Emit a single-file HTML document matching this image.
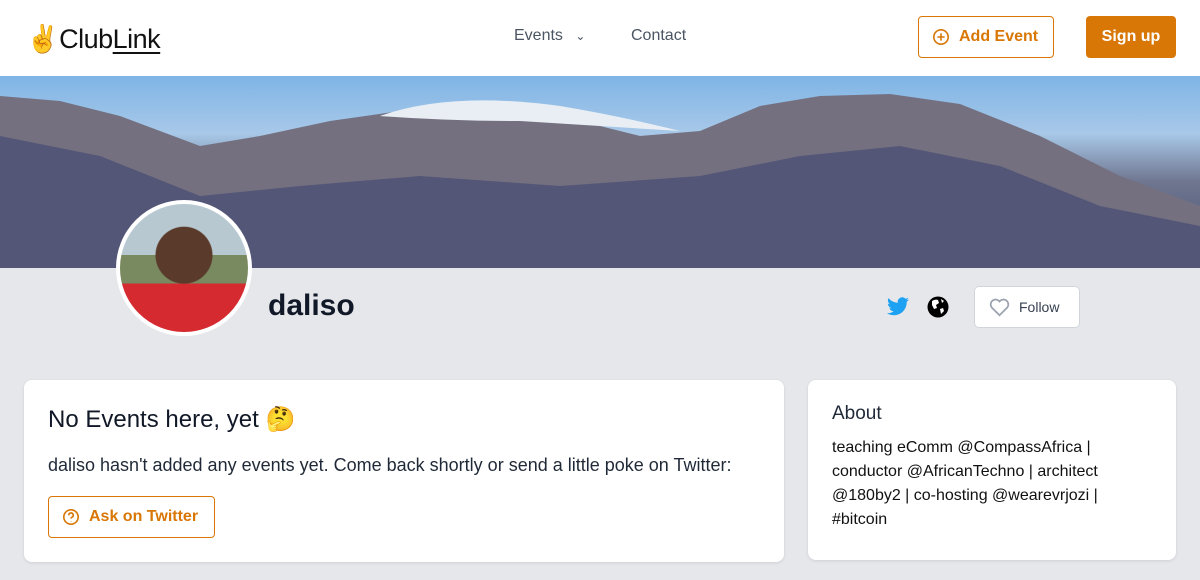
<!DOCTYPE html>
<html><head><meta charset="utf-8"><style>
*{box-sizing:border-box;margin:0;padding:0}
body{width:1200px;height:580px;overflow:hidden;background:#e5e7eb;font-family:"Liberation Sans","Noto Sans CJK JP",sans-serif;color:#111827}
.nav{height:76px;background:#fff;position:relative}
.logo{position:absolute;left:26px;top:23px;font-size:27px;color:#111;letter-spacing:-0.5px}
.logo u{text-decoration-thickness:2px;text-underline-offset:4px}
.nl{position:absolute;top:27px;font-size:16px;color:#4b5563}
.btn1{position:absolute;left:918px;top:16px;width:136px;height:42px;border:1px solid #d97706;border-radius:4px;color:#d97706;font-weight:bold;font-size:16px;padding:11px 0 0 40px}
.btn2{position:absolute;left:1086px;top:16px;width:90px;height:42px;background:#d97706;border-radius:4px;color:#fff;font-weight:bold;font-size:16px;text-align:center;padding-top:12px}
.banner{height:192px;position:relative;overflow:hidden;background:linear-gradient(#7fb5e6,#a8c8e8 30%,#6f7690 55%,#55607e 80%,#4a5478)}
.av{position:absolute;left:116px;top:200px;width:136px;height:136px;border-radius:50%;border:4px solid #fff;background:radial-gradient(circle at 50% 40%,#5a3a2a 0 28%,transparent 29%),linear-gradient(#b8c8d0 0 40%,#7a8a60 40% 62%,#d42a30 62%);}
.name{position:absolute;left:268px;top:289px;font-size:30px;font-weight:bold}
.follow{position:absolute;left:974px;top:286px;width:106px;height:42px;background:#fff;border:1px solid #d1d5db;border-radius:5px;font-size:14px;color:#374151;padding:12px 0 0 44px}
.card{position:absolute;background:#fff;border-radius:8px;box-shadow:0 1px 3px rgba(0,0,0,.1)}
</style></head><body>
<div class="nav">
<div class="logo">✌️Club<u>Link</u></div>
<div class="nl" style="left:514px">Events <span style="margin-left:8px;font-size:12px">&#8964;</span></div>
<div class="nl" style="left:631px">Contact</div>
<div class="btn1"><svg style="position:absolute;left:13px;top:11px" width="18" height="18" viewBox="0 0 20 20" fill="none" stroke="#d97706" stroke-width="1.8"><circle cx="10" cy="10" r="8"/><path d="M10 6v8M6 10h8"/></svg>Add Event</div>
<div class="btn2">Sign up</div>
</div>
<div class="banner">
<svg width="1200" height="192" style="position:absolute;left:0;top:0">
<path d="M0 20 L60 25 L120 40 L200 70 L260 60 L330 45 L400 35 L460 30 L560 40 L640 60 L700 55 L760 30 L820 20 L890 18 L960 28 L1040 60 L1120 100 L1200 130 L1200 192 L0 192Z" fill="#747080"/>
<path d="M0 60 L100 80 L200 120 L300 110 L420 100 L560 110 L700 100 L800 80 L900 70 L1000 90 L1100 130 L1200 150 L1200 192 L0 192Z" fill="#535676"/>
<path d="M380 40 Q450 15 560 30 Q620 40 680 55 Q600 50 520 45 Q450 45 380 40Z" fill="#e8eef4"/>
</svg>
</div>
<div class="av"></div>
<div class="name">daliso</div>
<svg style="position:absolute;left:887px;top:297px" width="22" height="19" viewBox="0 0 24 20"><path d="M24 2.4a10 10 0 0 1-2.8.8A5 5 0 0 0 23.3.4a10 10 0 0 1-3.1 1.2A4.9 4.9 0 0 0 11.8 6 14 14 0 0 1 1.7.9a4.9 4.9 0 0 0 1.5 6.6A4.9 4.9 0 0 1 1 6.9a4.9 4.9 0 0 0 3.9 4.8 5 5 0 0 1-2.2.1 4.9 4.9 0 0 0 4.6 3.4A9.9 9.9 0 0 1 0 17.3 14 14 0 0 0 7.5 19.5c9.1 0 14-7.5 14-14v-.6A10 10 0 0 0 24 2.4z" fill="#1da1f2"/></svg>
<svg style="position:absolute;left:927px;top:296px" width="22" height="22" viewBox="0 0 22 22"><circle cx="11" cy="11" r="10.5" fill="#000"/><path d="M5 5 Q8 3 11 4 L12 7 L9 9 L10 12 L7 13 L5 9Z M13 13 L16 12 L17 15 L14 18Z M14 3 L17 5 L15 7Z" fill="#fff"/></svg>
<div class="follow"><svg style="position:absolute;left:14px;top:11px" width="21" height="19" viewBox="0 0 24 22" fill="none" stroke="#9ca3af" stroke-width="2"><path d="M12 20 L3 11 A5 5 0 0 1 12 4 A5 5 0 0 1 21 11Z"/></svg>Follow</div>
<div class="card" style="left:24px;top:380px;width:760px;height:182px">
<div style="position:absolute;left:24px;top:25px;font-size:24px">No Events here, yet 🤔</div>
<div style="position:absolute;left:24px;top:75px;font-size:18px;color:#1f2937">daliso hasn't added any events yet. Come back shortly or send a little poke on Twitter:</div>
<div style="position:absolute;left:24px;top:116px;width:167px;height:42px;border:1px solid #d97706;border-radius:4px;color:#d97706;font-weight:bold;font-size:16px;padding:11px 0 0 40px"><svg style="position:absolute;left:13px;top:11px" width="18" height="18" viewBox="0 0 20 20" fill="none" stroke="#d97706" stroke-width="1.8"><circle cx="10" cy="10" r="8"/><path d="M7.5 8a2.5 2.5 0 1 1 3.5 2.3c-.7.3-1 .8-1 1.5M10 14.5v.3"/></svg>Ask on Twitter</div>
</div>
<div class="card" style="left:808px;top:380px;width:368px;height:180px">
<div style="position:absolute;left:24px;top:23px;font-size:19px;color:#1f2937">About</div>
<div style="position:absolute;left:24px;top:56px;width:300px;font-size:16px;line-height:24px;color:#111">teaching eComm @CompassAfrica | conductor @AfricanTechno | architect @180by2 | co-hosting @wearevrjozi | #bitcoin</div>
</div>
</body></html>
